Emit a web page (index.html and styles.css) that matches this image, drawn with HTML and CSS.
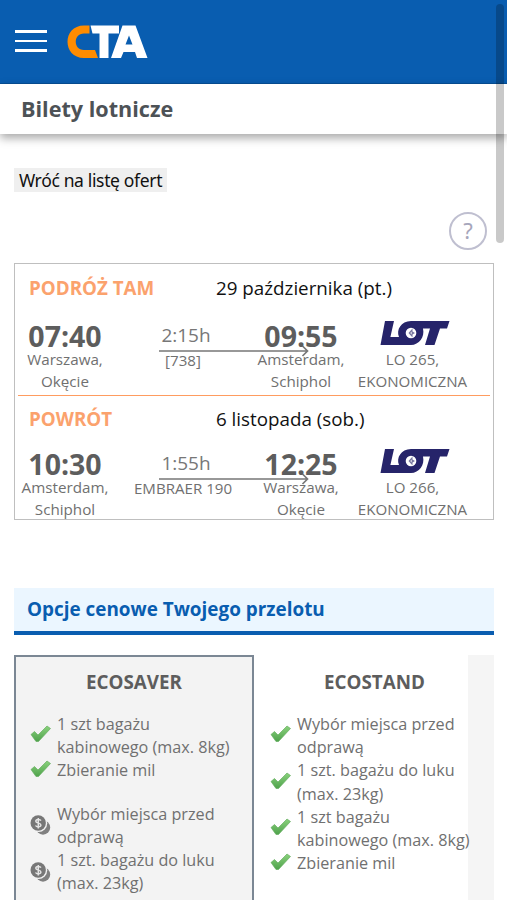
FILE: index.html
```html
<!DOCTYPE html>
<html lang="pl">
<head>
    <meta charset="UTF-8">
    <meta name="viewport" content="width=device-width, initial-scale=1.0">
    <title>Bilety lotnicze</title>
    <link rel="stylesheet" href="styles.css">
</head>
<body>
    <svg class="symbols" width="0" height="0">
        <defs>
            <linearGradient id="green" x1="0" y1="0" x2="0" y2="1">
                <stop offset="0" stop-color="#8ad27c"/>
                <stop offset="1" stop-color="#4fa24c"/>
            </linearGradient>
        </defs>
        <symbol id="check" viewBox="0 0 21 18">
            <path d="M1 9.5 L4.5 6.5 L8 10 L17 1 L20.500 3.500 L8.500 16.500 L6 16.500 Z" fill="url(#green)" stroke="#65ae60" stroke-width=".7" stroke-linejoin="round"/>
        </symbol>
        <symbol id="coins" viewBox="0 0 20 20">
            <circle cx="12.500" cy="12.500" r="7.200" fill="#808080"/>
            <circle cx="8" cy="8.300" r="8.700" fill="#f3f3f3"/>
            <circle cx="7.700" cy="8" r="7.700" fill="#777"/>
            <path d="M10.400 5.600 C9.600 4 5.300 4 5.300 6.300 C5.300 8.700 10.400 7.500 10.400 10.100 C10.400 12.500 6 12.300 5 10.500 M7.800 3 V13.400" fill="none" stroke="#e4e4e4" stroke-width="1.5"/>
        </symbol>
        <symbol id="lot" viewBox="0 0 70 26">
            <path d="M5 1 H14 L10.400 17 H19 C16 10 21 1 31 1 H69.500 L67 8.500 H60 L54.500 25 H45 L50 8.500 H43 C45 17 39 25 31 25 H0.500 Z" fill="#26246a"/>
            <circle cx="31" cy="13" r="5.300" fill="#fff"/>
            <path d="M32.500 8.500 L28.500 13 L32.500 17.500 V14.600 L35 13 L32.500 11.400Z" fill="#77769f"/>
            <path d="M31.600 11.500 L30.300 13 L31.600 14.500Z" fill="#fff"/>
        </symbol>
    </svg>

    <header class="top-bar">
        <div class="menu"><span></span><span></span><span></span></div>
        <svg class="logo" width="82" height="34" viewBox="0 0 82 34">
            <path d="M22.500 0.500 H17 C-5 0.500 -5 33 17 33 H31 L28 25 H17 C6 25 6 8.500 17 8.500 H22.500 Z" fill="#ff8c00"/>
            <path d="M23.500 0.500 H52 V8.500 H41.500 V33 H32.500 V8.500 H25.500 Z" fill="#fff"/>
            <path d="M55.500 0.500 H68.500 L80.500 33 H70 L68 27 H56.500 L54 33 H44 Z M58.500 19.500 H65.500 L62 10.500 Z" fill="#fff" fill-rule="evenodd"/>
        </svg>
    </header>
    <div class="title-bar">Bilety lotnicze</div>

    <main>
        <button class="back-button">Wróć na listę ofert</button>
        <div class="help-row"><div class="help">?</div></div>

        <section class="flights">
            <div class="flight outbound">
                <div class="flight-head"><b>PODRÓŻ TAM</b><span>29 października (pt.)</span></div>
                <div class="flight-body">
                    <div class="place"><strong>07:40</strong><p>Warszawa,<br>Okęcie</p></div>
                    <div class="route">
                        <div class="duration">2:15h</div>
                        <svg class="arrow" width="150" height="12" viewBox="0 0 150 12"><path d="M0 6 H148 M143.500 1 L148.500 6 L143.500 11" fill="none" stroke="#777" stroke-width="1.7"/></svg>
                        <div class="plane">[738]</div>
                    </div>
                    <div class="place arrival"><strong>09:55</strong><p>Amsterdam,<br>Schiphol</p></div>
                    <div class="carrier"><svg width="70" height="26"><use href="#lot"/></svg><p>LO 265,<br>EKONOMICZNA</p></div>
                </div>
            </div>
            <div class="flight return">
                <div class="flight-head"><b>POWRÓT</b><span>6 listopada (sob.)</span></div>
                <div class="flight-body">
                    <div class="place"><strong>10:30</strong><p>Amsterdam,<br>Schiphol</p></div>
                    <div class="route">
                        <div class="duration">1:55h</div>
                        <svg class="arrow" width="150" height="12" viewBox="0 0 150 12"><path d="M0 6 H148 M143.500 1 L148.500 6 L143.500 11" fill="none" stroke="#777" stroke-width="1.7"/></svg>
                        <div class="plane">EMBRAER 190</div>
                    </div>
                    <div class="place arrival"><strong>12:25</strong><p>Warszawa,<br>Okęcie</p></div>
                    <div class="carrier"><svg width="70" height="26"><use href="#lot"/></svg><p>LO 266,<br>EKONOMICZNA</p></div>
                </div>
            </div>
        </section>

        <h2>Opcje cenowe Twojego przelotu</h2>

        <section class="fares">
            <div class="fare selected">
                <h3>ECOSAVER</h3>
                <ul>
                    <li><svg class="check"><use href="#check"/></svg><span>1 szt bagażu<br>kabinowego (max. 8kg)</span></li>
                    <li><svg class="check"><use href="#check"/></svg><span>Zbieranie mil</span></li>
                </ul>
                <ul>
                    <li><svg class="coins"><use href="#coins"/></svg><span>Wybór miejsca przed<br>odprawą</span></li>
                    <li><svg class="coins"><use href="#coins"/></svg><span>1 szt. bagażu do luku<br>(max. 23kg)</span></li>
                    <li><svg class="coins"><use href="#coins"/></svg><span>Wymiana biletu<br>przed wylotem</span></li>
                </ul>
            </div>
            <div class="fare">
                <h3>ECOSTAND</h3>
                <ul>
                    <li><svg class="check"><use href="#check"/></svg><span>Wybór miejsca przed<br>odprawą</span></li>
                    <li><svg class="check"><use href="#check"/></svg><span>1 szt. bagażu do luku<br>(max. 23kg)</span></li>
                    <li><svg class="check"><use href="#check"/></svg><span>1 szt bagażu<br>kabinowego (max. 8kg)</span></li>
                    <li><svg class="check"><use href="#check"/></svg><span>Zbieranie mil</span></li>
                </ul>
                <ul>
                    <li><svg class="coins"><use href="#coins"/></svg><span>Zmiana biletu<br>przed wylotem</span></li>
                </ul>
            </div>
        </section>
    </main>
    <div class="scroll-thumb"></div>
</body>
</html>
```

FILE: styles.css
```css
* {
    box-sizing: border-box;
}
body {
    margin: 0;
    height: 900px;
    overflow: hidden;
    font-family: "Open Sans", sans-serif;
    color: #707070;
    background-color: #fff;
}
p, h2, h3, ul {
    margin: 0;
    padding: 0;
}
.symbols {
    position: absolute;
}
.top-bar {
    height: 84px;
    padding: 25px 0 0 15px;
    display: flex;
    align-items: flex-start;
    background-color: #095db0;
    border-bottom: 1px solid #064f96;
}
.menu {
    width: 32px;
    margin: 5px 20px 0 0;
    display: flex;
    flex-direction: column;
    gap: 7px;
}
.menu span {
    height: 2.5px;
    background-color: #fff;
}
.title-bar {
    height: 50px;
    padding-left: 21px;
    line-height: 50px;
    font-size: 21.6px;
    font-weight: bold;
    color: #4d5256;
    box-shadow: 0 4px 9px rgba(0, 0, 0, 0.35);
}
main {
    height: 766px;
    padding: 34px 13px 0 14px;
    overflow: hidden;
}
.back-button {
    display: block;
    width: 153px;
    height: 24px;
    padding: 0;
    border: none;
    background-color: #efefef;
    color: #111;
    font: 17.5px/24px "Noto Sans", sans-serif;
    letter-spacing: -0.35px;
    white-space: nowrap;
}
.help-row {
    height: 71px;
    padding: 20px 7px 0 0;
    display: flex;
    justify-content: flex-end;
}
.help {
    width: 38px;
    height: 38px;
    border: 2px solid #bfbfd0;
    border-radius: 50%;
    text-align: center;
    font: 22px/33px "Noto Sans", sans-serif;
    color: #a6a6bb;
}
.flights {
    height: 257px;
    padding: 0 3px;
    border: 1px solid #bfbfbf;
}
.flight {
    padding-top: 9px;
}
.outbound {
    height: 132px;
    border-bottom: 1px solid #ff9c60;
}
.return {
    padding-top: 8px;
}
.flight-head {
    display: grid;
    grid-template-columns: 187px 1fr;
    padding-left: 11px;
    line-height: 30px;
    font-size: 18.8px;
    color: #111;
}
.flight-head b {
    color: #fba26d;
}
.flight-body {
    display: grid;
    grid-template-columns: 94px 142px 94px 1fr;
    padding-top: 16px;
    text-align: center;
}
.return .flight-body {
    padding-top: 13px;
}
.place strong {
    display: block;
    line-height: 34px;
    font-size: 28.5px;
    color: #5d5d5d;
}
.place p {
    margin-top: -4px;
    line-height: 21.5px;
    font-size: 15.2px;
}
.duration {
    margin-top: 4px;
    padding-left: 6px;
    line-height: 24px;
    font-size: 19px;
    color: #777;
}
.arrow {
    display: block;
    margin: -2px 0 -8px 47px;
}
.route {
    display: flex;
    flex-direction: column;
}
.plane {
    line-height: 22px;
    font-size: 15.1px;
}
.carrier svg {
    display: block;
    margin: 1px auto 0 32px;
}
.carrier p {
    margin-top: 3px;
    padding-right: 13px;
    line-height: 21.5px;
    font-size: 15.1px;
}
h2 {
    height: 47px;
    margin-top: 68px;
    padding-left: 13px;
    border-bottom: 4px solid #095db0;
    background-color: #ebf6ff;
    line-height: 43px;
    font-size: 18.9px;
    color: #095db0;
}
.fares {
    display: flex;
    height: 400px;
    margin-top: 20px;
    background-color: #f5f5f5;
}
.fare {
    width: 214px;
    padding: 2px 0 0 1px;
    background-color: #fff;
}
.fare.selected {
    width: 240px;
    padding: 0 0 0 14px;
    border: 2px solid #7b8794;
    background-color: #f3f3f3;
}
.fare h3 {
    height: 56px;
    padding-left: 26px;
    line-height: 50px;
    text-align: center;
    font-size: 18.8px;
    color: #5d5d5d;
}
.fare.selected h3 {
    margin-left: -14px;
    padding-left: 0;
}
.fare ul {
    list-style: none;
    padding-left: 15px;
    margin-bottom: 20px;
}
.fare.selected ul {
    padding-left: 0;
}
.fare li {
    display: flex;
    align-items: center;
    line-height: 23.2px;
    font-size: 16.2px;
    white-space: nowrap;
}
.fare li svg {
    flex: none;
    margin: -4px 6px 0 0;
}
.fare li .coins {
    margin-top: -1px;
}
.check {
    width: 21px;
    height: 18px;
}
.coins {
    width: 21px;
    height: 20px;
}
.scroll-thumb {
    position: absolute;
    top: 4px;
    right: 3px;
    width: 8px;
    height: 239px;
    border-radius: 4px;
    background-color: rgba(0, 0, 0, 0.21);
}
```
